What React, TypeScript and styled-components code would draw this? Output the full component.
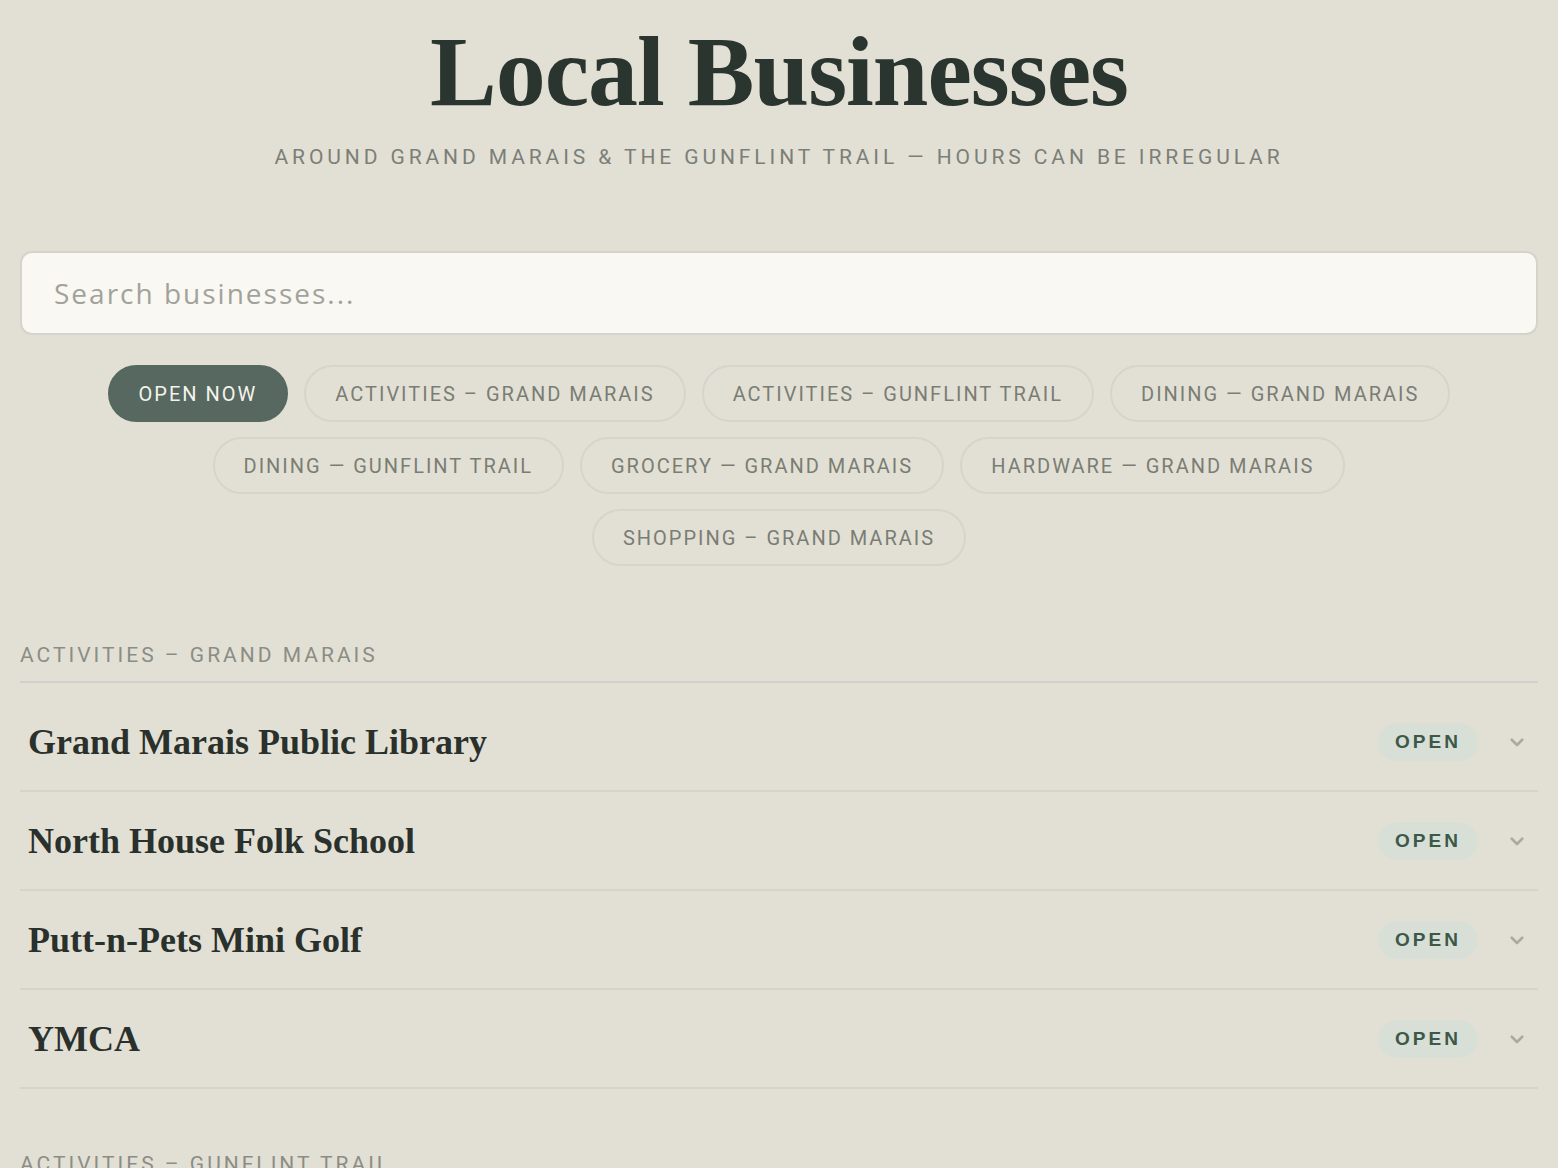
import React, { useState } from 'react';
import styled, { createGlobalStyle } from 'styled-components';

const GlobalStyle = createGlobalStyle`
  body {
    margin: 0;
    background: #e2e0d5;
    font-family: Roboto, 'Liberation Sans', Arial, sans-serif;
  }
`;

interface Business {
  name: string;
  open: boolean;
}

interface Section {
  title: string;
  items: Business[];
}

const filters = [
  'ACTIVITIES – GRAND MARAIS',
  'ACTIVITIES – GUNFLINT TRAIL',
  'DINING — GRAND MARAIS',
  'DINING — GUNFLINT TRAIL',
  'GROCERY — GRAND MARAIS',
  'HARDWARE — GRAND MARAIS',
  'SHOPPING – GRAND MARAIS',
];

const sections: Section[] = [
  {
    title: 'ACTIVITIES – GRAND MARAIS',
    items: [
      { name: 'Grand Marais Public Library', open: true },
      { name: 'North House Folk School', open: true },
      { name: 'Putt-n-Pets Mini Golf', open: true },
      { name: 'YMCA', open: true },
    ],
  },
  {
    title: 'ACTIVITIES – GUNFLINT TRAIL',
    items: [
      { name: 'Gunflint Lodge', open: true },
      { name: 'Trail Center', open: true },
    ],
  },
];

const Page = styled.div`
  padding: 20px 20px 0;
  height: 1168px;
  overflow: hidden;
  box-sizing: border-box;
`;

const Header = styled.header`
  text-align: center;
`;

const Title = styled.h1`
  margin: 0;
  font-family: 'Liberation Serif', 'Times New Roman', serif;
  font-weight: 700;
  font-size: 100px;
  line-height: 104px;
  letter-spacing: -1px;
  color: #2b352f;
`;

const Subtitle = styled.p`
  margin: 21px 0 0;
  font-size: 21px;
  letter-spacing: 3.9px;
  color: #7c7f77;
`;

const SearchInput = styled.input`
  display: block;
  width: 100%;
  box-sizing: border-box;
  margin-top: 82px;
  height: 84px;
  padding: 0 32px;
  border: 2px solid #d4d4cd;
  border-radius: 12px;
  background: #f9f8f3;
  font-family: 'Open Sans', sans-serif;
  font-size: 28px;
  letter-spacing: 2px;
  color: #333;
  outline: none;

  &::placeholder {
    color: #a2a29b;
  }
`;

const Chips = styled.div`
  display: flex;
  flex-wrap: wrap;
  justify-content: center;
  gap: 15px 16px;
  padding: 0 60px 14px;
  margin-top: 30px;
`;

const Chip = styled.button<{ $active?: boolean }>`
  height: 57px;
  padding: 0 29px;
  border-radius: 29px;
  border: 2px solid ${({ $active }) => ($active ? '#56685f' : '#d4d5cd')};
  background: ${({ $active }) => ($active ? '#56685f' : 'transparent')};
  color: ${({ $active }) => ($active ? '#f4f3ec' : '#7a7d74')};
  font-family: Roboto, 'Liberation Sans', Arial, sans-serif;
  font-size: 20px;
  letter-spacing: 2px;
  cursor: pointer;
`;

const SectionBlock = styled.section`
  margin-top: 63px;
`;

const SectionTitle = styled.h2`
  margin: 0;
  padding-bottom: 14px;
  font-weight: 400;
  font-size: 21px;
  letter-spacing: 3px;
  color: #8b8d85;
  border-bottom: 2px solid #cdd2d1;
`;

const List = styled.div`
  padding-top: 10px;
`;

const Row = styled.div`
  display: flex;
  align-items: center;
  height: 97px;
  padding: 0 8px;
  border-bottom: 2px solid #d6d4c9;
`;

const Name = styled.div`
  flex: 1;
  font-family: 'Liberation Serif', 'Times New Roman', serif;
  font-weight: 700;
  font-size: 36px;
  color: #2a302b;
`;

const Badge = styled.span`
  display: inline-flex;
  align-items: center;
  justify-content: center;
  width: 100px;
  height: 38px;
  border-radius: 19px;
  background: #d8dfd6;
  color: #3c5849;
  font-family: 'Liberation Sans', Arial, sans-serif;
  font-weight: 700;
  font-size: 19px;
  letter-spacing: 3px;
`;

const Chevron = styled.span`
  display: flex;
  margin-left: 30px;
  margin-right: 4px;
  color: #a9aaa1;
`;

const App: React.FC = () => {
  const [query, setQuery] = useState('');
  const [active, setActive] = useState<string>('OPEN NOW');

  return (
    <Page>
      <GlobalStyle />
      <Header>
        <Title>Local Businesses</Title>
        <Subtitle>AROUND GRAND MARAIS &amp; THE GUNFLINT TRAIL — HOURS CAN BE IRREGULAR</Subtitle>
      </Header>

      <SearchInput
        placeholder="Search businesses..."
        value={query}
        onChange={(e) => setQuery(e.target.value)}
      />

      <Chips>
        {['OPEN NOW', ...filters].map((f) => (
          <Chip key={f} $active={active === f} onClick={() => setActive(f)}>
            {f}
          </Chip>
        ))}
      </Chips>

      {sections.map((section) => (
        <SectionBlock key={section.title}>
          <SectionTitle>{section.title}</SectionTitle>
          <List>
            {section.items.map((item) => (
              <Row key={item.name}>
                <Name>{item.name}</Name>
                {item.open && <Badge>OPEN</Badge>}
                <Chevron>
                  <svg width="18" height="18" viewBox="0 0 24 24" fill="none" stroke="currentColor" strokeWidth="3.5" strokeLinecap="round" strokeLinejoin="round">
                    <path d="M5 9l7 7 7-7" />
                  </svg>
                </Chevron>
              </Row>
            ))}
          </List>
        </SectionBlock>
      ))}
    </Page>
  );
};

export default App;
